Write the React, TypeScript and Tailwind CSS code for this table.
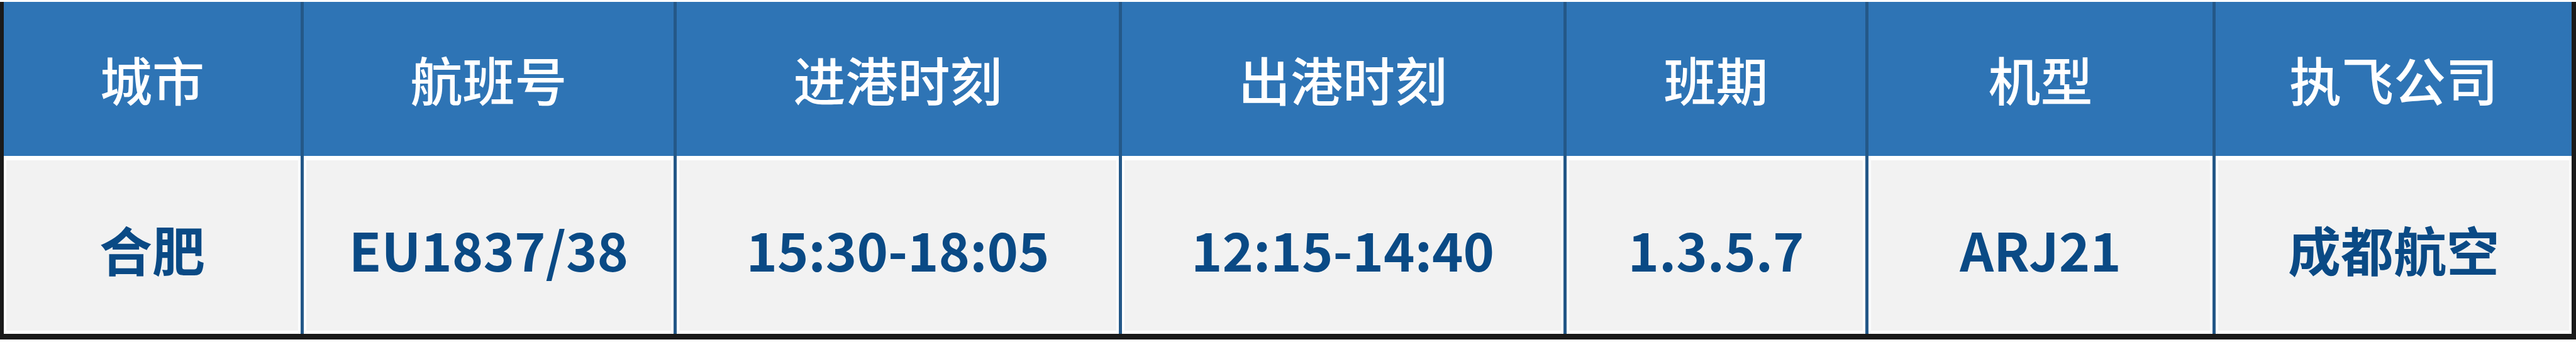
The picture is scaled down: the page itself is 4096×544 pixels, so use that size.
import React from "react";

const cols = [
  { h: "城市", v: "合肥", w: "w-[472px]" },
  { h: "航班号", v: "EU1837/38", w: "w-[588px]" },
  { h: "进港时刻", v: "15:30-18:05", w: "w-[703px]" },
  { h: "出港时刻", v: "12:15-14:40", w: "w-[702px]" },
  { h: "班期", v: "1.3.5.7", w: "w-[475px]" },
  { h: "机型", v: "ARJ21", w: "w-[547px]" },
  { h: "执飞公司", v: "成都航空", w: "w-[566px]" },
];

export default function App() {
  return (
    <div
      className="w-[4096px] h-[544px] bg-white pt-[3px]"
      style={{ fontFamily: '"Noto Sans CJK SC", "Noto Sans", sans-serif' }}
    >
      <div className="flex h-[537px] border-l-[6px] border-r-[7px] border-b-[9px] border-[#1a1a1a] bg-[#245888]">
        {cols.map((c, i) => (
          <div
            key={i}
            className={`${c.w} shrink-0 flex flex-col ${i < cols.length - 1 ? "mr-[5px]" : ""}`}
          >
            <div className="h-[245px] bg-[#2e74b5] flex items-center justify-center text-white text-[83px] font-medium leading-none">
              {c.h}
            </div>
            <div className="h-[283px] bg-white pt-[7px] pb-[5px] px-[4px] flex">
              <div className="flex-1 bg-[#f2f2f2] flex items-center justify-center pt-[10px] text-[#0a4a85] text-[84px] font-bold leading-none">
                {c.v}
              </div>
            </div>
          </div>
        ))}
      </div>
    </div>
  );
}
